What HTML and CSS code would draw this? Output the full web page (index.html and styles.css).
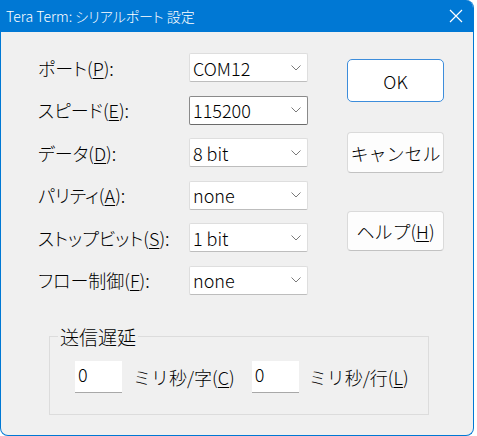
FILE: index.html
```html
<!DOCTYPE html>
<html lang="ja">
<head>
<meta charset="utf-8">
<title>Tera Term: シリアルポート 設定</title>
<link rel="stylesheet" href="styles.css">
</head>
<body>
<div class="window">
  <div class="titlebar">
    <span class="title">Tera Term: シリアルポート 設定</span>
    <svg class="close" width="14" height="14" viewBox="0 0 14 14"><path d="M1 1 L13 13 M13 1 L1 13" stroke="#fff" stroke-width="1.2" fill="none"/></svg>
  </div>
  <div class="content">
    <div class="main">
      <div class="form">
        <span class="label">ポート(<u>P</u>):</span>
        <div class="combo"><span>COM12</span><svg class="chev" width="10" height="6" viewBox="0 0 10 6"><path d="M0.5 0.5 L5 5 L9.5 0.5" stroke="#7a7a7a" stroke-width="1" fill="none"/></svg></div>
        <span class="label">スピード(<u>E</u>):</span>
        <div class="combo focused"><span>115200</span><svg class="chev" width="10" height="6" viewBox="0 0 10 6"><path d="M0.5 0.5 L5 5 L9.5 0.5" stroke="#7a7a7a" stroke-width="1" fill="none"/></svg></div>
        <span class="label">データ(<u>D</u>):</span>
        <div class="combo"><span>8 bit</span><svg class="chev" width="10" height="6" viewBox="0 0 10 6"><path d="M0.5 0.5 L5 5 L9.5 0.5" stroke="#7a7a7a" stroke-width="1" fill="none"/></svg></div>
        <span class="label">パリティ(<u>A</u>):</span>
        <div class="combo"><span>none</span><svg class="chev" width="10" height="6" viewBox="0 0 10 6"><path d="M0.5 0.5 L5 5 L9.5 0.5" stroke="#7a7a7a" stroke-width="1" fill="none"/></svg></div>
        <span class="label">ストップビット(<u>S</u>):</span>
        <div class="combo"><span>1 bit</span><svg class="chev" width="10" height="6" viewBox="0 0 10 6"><path d="M0.5 0.5 L5 5 L9.5 0.5" stroke="#7a7a7a" stroke-width="1" fill="none"/></svg></div>
        <span class="label">フロー制御(<u>F</u>):</span>
        <div class="combo"><span>none</span><svg class="chev" width="10" height="6" viewBox="0 0 10 6"><path d="M0.5 0.5 L5 5 L9.5 0.5" stroke="#7a7a7a" stroke-width="1" fill="none"/></svg></div>
      </div>
      <div class="buttons">
        <div class="btn ok">OK</div>
        <div class="btn cancel">キャンセル</div>
        <div class="btn help">ヘルプ(<u>H</u>)</div>
      </div>
    </div>
    <fieldset class="group">
      <legend>送信遅延</legend>
      <div class="delay">
        <div class="edit">0</div>
        <span class="dlabel">ミリ秒/字(<u>C</u>)</span>
        <div class="edit second">0</div>
        <span class="dlabel last">ミリ秒/行(<u>L</u>)</span>
      </div>
    </fieldset>
  </div>
</div>
</body>
</html>
```
FILE: styles.css
```css
html, body {
  margin: 0;
  padding: 0;
  background: #ffffff;
}
body {
  font-family: "Noto Sans CJK JP", sans-serif;
  font-weight: 300;
  color: #000;
  width: 477px;
  height: 436px;
  overflow: hidden;
}
.window {
  box-sizing: border-box;
  width: 474px;
  height: 436px;
  background: #f0f0f0;
  border: 1px solid #0078d4;
  border-top: 0;
  border-radius: 0 8px 8px 8px;
  overflow: hidden;
}
.titlebar {
  height: 32px;
  background: #0078d4;
  display: flex;
  align-items: center;
  justify-content: space-between;
  padding: 0 11px 0 6px;
  margin: 0 -1px;
}
.title {
  color: #fff;
  font-size: 14px;
  line-height: 1;
  font-feature-settings: "palt";
}
.close {
  display: block;
}
.content {
  padding: 21px 0 0 37px;
}
.main {
  display: flex;
  align-items: flex-start;
}
.form {
  display: grid;
  grid-template-columns: 151px 119px;
  grid-auto-rows: 29px;
  row-gap: 13.6px;
  align-items: center;
}
.label {
  font-size: 18px;
  line-height: 1;
  font-feature-settings: "palt";
  white-space: nowrap;
}
u {
  text-underline-offset: 2px;
  text-decoration-thickness: 1px;
}
.combo {
  box-sizing: border-box;
  height: 29px;
  background: #fff;
  border: 1px solid #dedede;
  border-bottom-color: #bdbdbd;
  border-radius: 2px;
  display: flex;
  align-items: center;
  justify-content: space-between;
  padding: 0 6px 0 3px;
  font-size: 18px;
}
.combo.focused {
  border-color: #8a8a8a;
  border-bottom-color: #6a6a6a;
}
.chev {
  display: block;
}
.buttons {
  margin-left: 39px;
  width: 97px;
  display: flex;
  flex-direction: column;
}
.btn {
  box-sizing: border-box;
  background: #fdfdfd;
  border: 1px solid #dadada;
  border-bottom-color: #c2c2c2;
  border-radius: 4px;
  display: flex;
  align-items: center;
  justify-content: center;
  font-size: 18px;
  white-space: nowrap;
}
.ok {
  margin-top: 6px;
  height: 43px;
  border: 1.5px solid #3d8ddb;
  border-radius: 5px;
  background: #fff;
}
.cancel {
  margin-top: 30px;
  height: 41px;
}
.help {
  margin-top: 38px;
  height: 40px;
}
.group {
  box-sizing: border-box;
  margin: 32px 0 0 11px;
  width: 380px;
  height: 88px;
  border: 1px solid #dcdcdc;
  padding: 0;
}
.group legend {
  font-size: 19px;
  line-height: 20px;
  margin-left: 8px;
  padding: 0 2px;
}
.delay {
  display: flex;
  align-items: center;
  padding: 14px 0 0 25px;
}
.edit {
  box-sizing: border-box;
  width: 47px;
  height: 32px;
  background: #fff;
  border-bottom: 1px solid #a8a8a8;
  font-size: 18px;
  padding: 2px 0 0 3px;
  line-height: 22px;
}
.dlabel {
  font-size: 18px;
  margin-left: 11px;
  white-space: nowrap;
}
.second {
  margin-left: 17px;
}
.dlabel.last {
  margin-left: 10px;
}
```
